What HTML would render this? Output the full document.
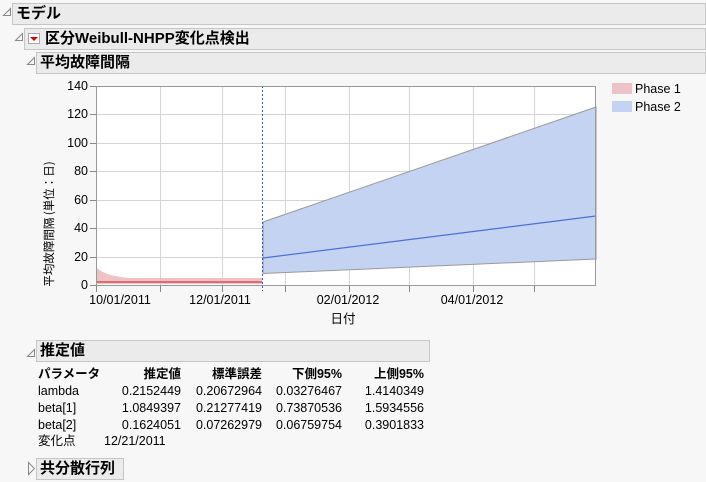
<!DOCTYPE html><html><head><meta charset="utf-8"><style>
body{margin:0;width:706px;height:482px;background:#f7f7f7;font-family:"Liberation Sans","Noto Sans CJK JP",sans-serif;position:relative;overflow:hidden;font-size:12px;color:#000}
.bar{position:absolute;background:#ebebeb;border:1px solid #c6c6c6;font-weight:bold;font-size:15px;line-height:20px;padding-left:3px;box-sizing:border-box;height:22px}
.tri{position:absolute;width:0;height:0}
.t{position:absolute;white-space:nowrap;font-size:12.5px;line-height:14px}
table{position:absolute;border-collapse:collapse;font-size:12.5px}
td{padding:0;height:17.3px;white-space:nowrap}
</style></head><body>
<svg style="position:absolute;left:0;top:0" width="706" height="482">
<g fill="none" stroke="#888" stroke-width="1">
<path d="M3.5 15.5 L10.5 8.5 L10.5 15.5 Z"/>
<path d="M15.5 40.5 L22.5 33.5 L22.5 40.5 Z"/>
<path d="M27.5 64.5 L34.5 57.5 L34.5 64.5 Z"/>
<path d="M27.5 356.5 L34.5 349.5 L34.5 356.5 Z"/>
<path d="M28.5 462.5 L34.5 468.5 L28.5 474.5 Z"/>
</g>
</svg>
<div class="bar" style="left:12px;top:3px;width:694px">モデル</div>
<div class="bar" style="left:24px;top:28px;width:682px;padding-left:20px">区分Weibull-NHPP変化点検出</div>
<div style="position:absolute;left:28px;top:33px;width:12px;height:11px;background:#fff;border:1px solid #aaa;box-sizing:border-box"></div>
<div class="tri" style="left:30px;top:37px;border-left:4px solid transparent;border-right:4px solid transparent;border-top:4px solid #d00"></div>
<div class="bar" style="left:36px;top:52px;width:670px">平均故障間隔</div>
<svg style="position:absolute;left:0;top:75px" width="706" height="260">
<rect x="96" y="11" width="500" height="200" fill="#fff"/>
<g stroke="#d4d4d4" stroke-width="1">
<path d="M96 39.5H596M96 68.5H596M96 96.5H596M96 125.5H596M96 153.5H596M96 182.5H596"/>
<path d="M160.5 11V211M222.5 11V211M285.5 11V211M349.5 11V211M409.5 11V211M473.5 11V211M534.5 11V211"/>
</g>
<path d="M97 193 Q105 201 130 203 L262 203 L262 209 L97 209 Z" fill="#e8b4b8" opacity="0.8"/>
<path d="M97 207 L262 207" stroke="#d9505a" stroke-width="1.5"/>
<path d="M263 147 L596 32 L596 184 L263 198.5 Z" fill="#c4d3f2" stroke="#999" stroke-width="1"/>
<path d="M263 183 L596 141" stroke="#4a6fd8" stroke-width="1.2"/>
<path d="M262.5 11V216" stroke="#3355cc" stroke-dasharray="2,2"/>
<rect x="96.5" y="11.5" width="499" height="199" fill="none" stroke="#999"/>
<g stroke="#888"><path d="M90 11.5H96M90 39.5H96M90 68.5H96M90 96.5H96M90 125.5H96M90 153.5H96M90 182.5H96M90 210.5H96"/>
<path d="M96.5 211V217M160.5 211V217M222.5 211V217M285.5 211V217M349.5 211V217M409.5 211V217M473.5 211V217M534.5 211V217"/></g>
<g font-size="12.5" text-anchor="end" font-family="Liberation Sans">
<text x="88" y="15">140</text><text x="88" y="43">120</text><text x="88" y="72">100</text><text x="88" y="100">80</text><text x="88" y="129">60</text><text x="88" y="157">40</text><text x="88" y="186">20</text><text x="88" y="214">0</text>
</g>
<g font-size="12.5" text-anchor="middle" font-family="Liberation Sans">
<text x="120" y="229">10/01/2011</text><text x="220" y="229">12/01/2011</text><text x="348" y="229">02/01/2012</text><text x="472" y="229">04/01/2012</text>
<text x="343" y="248" font-family="Noto Sans CJK JP">日付</text>
</g>
<text transform="translate(53 149) rotate(-90)" text-anchor="middle" font-size="11.5" font-family="Noto Sans CJK JP">平均故障間隔 (単位：日)</text>
<rect x="612" y="8" width="20" height="11" fill="#ecc4c8"/>
<rect x="612" y="26" width="20" height="11" fill="#c4d3f2"/>
<text x="635" y="18" font-size="12.5" font-family="Liberation Sans">Phase 1</text>
<text x="635" y="36" font-size="12.5" font-family="Liberation Sans">Phase 2</text>
</svg>
<div class="bar" style="left:36px;top:340px;width:394px">推定値</div>
<table style="left:38px;top:363px">
<tr style="font-weight:bold"><td style="width:80px">パラメータ</td><td style="width:63px;text-align:right">推定値</td><td style="width:81px;text-align:right">標準誤差</td><td style="width:80px;text-align:right">下側95%</td><td style="width:82px;text-align:right">上側95%</td></tr>
<tr><td>lambda</td><td align="right">0.2152449</td><td align="right">0.20672964</td><td align="right">0.03276467</td><td align="right">1.4140349</td></tr>
<tr><td>beta[1]</td><td align="right">1.0849397</td><td align="right">0.21277419</td><td align="right">0.73870536</td><td align="right">1.5934556</td></tr>
<tr><td>beta[2]</td><td align="right">0.1624051</td><td align="right">0.07262979</td><td align="right">0.06759754</td><td align="right">0.3901833</td></tr>
</table>
<div class="t" style="left:38px;top:434px">変化点</div>
<div class="t" style="left:104px;top:434px">12/21/2011</div>
<div class="bar" style="left:36px;top:458px;width:88px">共分散行列</div>
</body></html>
